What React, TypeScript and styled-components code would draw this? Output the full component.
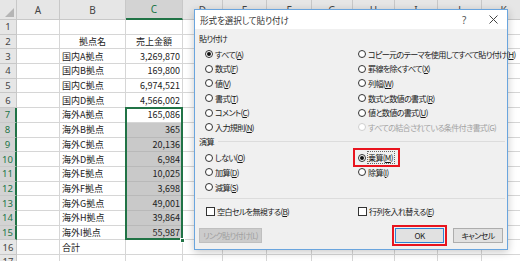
import React from "react";
import styled, { createGlobalStyle, css } from "styled-components";

const GlobalStyle = createGlobalStyle`
  html, body { margin: 0; padding: 0; background: #ffffff; }
  body { width: 520px; height: 261px; overflow: hidden; font-family: "Noto Sans CJK JP", "Noto Sans", sans-serif; }
  * { box-sizing: border-box; }
`;

const GREEN = "#217346";
const RED = "#e8141e";
const ROW_H = 14.7;
const COLS = [17, 43, 66, 57, 40, 44, 45, 41, 42, 43, 44, 44];
const COL_LETTERS = ["A", "B", "C", "D", "E", "F", "G", "H", "I", "J", "K"];

const Stage = styled.div`
  position: relative;
  width: 520px;
  height: 261px;
  overflow: hidden;
`;

const Sheet = styled.div`
  display: grid;
  grid-template-columns: ${COLS.map((c) => c + "px").join(" ")};
  grid-template-rows: 20px repeat(17, ${ROW_H}px);
  font-size: 9px;
  color: #222;
  font-feature-settings: "palt";
`;

type Kind = "corner" | "colhdr" | "rowhdr" | "data";

const Cell = styled.div<{ $kind: Kind; $sel?: boolean; $fill?: boolean; $align?: "left" | "right" | "center" }>`
  display: flex;
  align-items: center;
  overflow: hidden;
  white-space: nowrap;
  border-right: 1px solid #d6d6d6;
  border-bottom: 1px solid #d6d6d6;
  padding: 0 2px;
  justify-content: ${(p) => (p.$align === "right" ? "flex-end" : p.$align === "center" ? "center" : "flex-start")};
  ${(p) =>
    p.$kind === "corner" &&
    css`
      background: #e6e6e6;
      border-right: 1px solid #c8c8c8;
      border-bottom: 1px solid #c8c8c8;
      position: relative;
    `}
  ${(p) =>
    p.$kind === "colhdr" &&
    css`
      background: ${p.$sel ? "#d3d3d3" : "#e6e6e6"};
      color: ${p.$sel ? GREEN : "#444"};
      justify-content: center;
      font-size: 10px;
      font-family: "Noto Sans", sans-serif;
      border-right: 1px solid #c8c8c8;
      border-bottom: ${p.$sel ? `2px solid ${GREEN}` : "1px solid #c8c8c8"};
    `}
  ${(p) =>
    p.$kind === "rowhdr" &&
    css`
      background: ${p.$sel ? "#d3d3d3" : "#e6e6e6"};
      color: ${p.$sel ? GREEN : "#444"};
      justify-content: center;
      font-size: 9.5px;
      font-family: "Noto Sans", sans-serif;
      padding: 0;
      border-right: ${p.$sel ? `2px solid ${GREEN}` : "1px solid #c8c8c8"};
      border-bottom: 1px solid #c8c8c8;
    `}
  ${(p) =>
    p.$kind === "data" &&
    p.$fill &&
    css`
      background: #c9c9c9;
      border-right-color: #c9c9c9;
      border-bottom-color: #b9b9b9;
    `}
`;

const CornerTriangle = styled.div`
  position: absolute;
  right: 2px;
  bottom: 2px;
  width: 0;
  height: 0;
  border-left: 9px solid transparent;
  border-bottom: 9px solid #b5b5b5;
`;

const SelectionBox = styled.div`
  position: absolute;
  border: 2px solid ${GREEN};
  pointer-events: none;
`;

const FillHandle = styled.div`
  position: absolute;
  width: 5px;
  height: 5px;
  background: ${GREEN};
  border: 1px solid #fff;
`;

/* ---------------- Dialog ---------------- */

const Dialog = styled.div`
  position: absolute;
  left: 194px;
  top: 9px;
  width: 314px;
  height: 241px;
  border: 1px solid #6aa5de;
  background: #f0f0f0;
  box-shadow: 0 2px 8px rgba(0, 0, 0, 0.22);
  display: flex;
  flex-direction: column;
  font-size: 8.1px;
  color: #1a1a1a;
  font-feature-settings: "palt";
  letter-spacing: -0.7px;
`;

const TitleBar = styled.div`
  height: 19px;
  background: #ffffff;
  display: flex;
  align-items: center;
  padding-left: 5px;
  padding-right: 5px;
  font-size: 8.6px;
  letter-spacing: -0.1px;
`;

const TitleText = styled.div`
  flex: 1;
  color: #333;
`;

const HelpButton = styled.div`
  width: 12px;
  margin-right: 14px;
  text-align: center;
  color: #555;
  font-family: "Noto Sans", sans-serif;
  font-size: 10px;
`;

const CloseButton = styled.div`
  width: 18px;
  height: 19px;
  display: flex;
  align-items: center;
  justify-content: center;
`;

const Body = styled.div`
  flex: 1;
  display: flex;
  flex-direction: column;
  padding-top: 2px;
`;

const GroupLabel = styled.div<{ $line?: boolean }>`
  height: 14px;
  display: flex;
  align-items: center;
  padding-left: 4px;
  gap: 4px;
  &::after {
    content: "";
    flex: 1;
    height: 1px;
    margin-right: 2px;
    background: ${(p) => (p.$line ? "#dcdcdc" : "transparent")};
  }
`;

const RadioGrid = styled.div<{ $rows: number }>`
  display: grid;
  grid-template-columns: 153px 1fr;
  grid-template-rows: repeat(${(p) => p.$rows}, 14.6px);
  grid-auto-flow: column;
  padding-left: 10px;
  padding-top: 2px;
`;

const RadioItem = styled.div<{ $disabled?: boolean; $highlight?: boolean }>`
  display: flex;
  align-items: center;
  gap: 2px;
  color: ${(p) => (p.$disabled ? "#a3a3a3" : "inherit")};
  white-space: nowrap;
  ${(p) =>
    p.$highlight &&
    css`
      justify-self: start;
      align-self: center;
      height: 13px;
      outline: 2px solid ${RED};
      outline-offset: 1px;
      margin-left: -2px;
      padding-left: 2px;
      padding-right: 3px;
    `}
`;

const RadioCircle = styled.span<{ $checked?: boolean; $disabled?: boolean }>`
  width: 8px;
  height: 8px;
  border-radius: 50%;
  border: 1px solid ${(p) => (p.$disabled ? "#cfcfcf" : "#333")};
  background: #fff;
  display: inline-flex;
  align-items: center;
  justify-content: center;
  flex-shrink: 0;
  &::after {
    content: "";
    width: 4px;
    height: 4px;
    border-radius: 50%;
    background: ${(p) => (p.$checked ? "#111" : "transparent")};
  }
`;

const FocusText = styled.span<{ $focus?: boolean }>`
  ${(p) =>
    p.$focus &&
    css`
      outline: 1px dotted #666;
      outline-offset: 0px;
      padding-right: 1px;
    `}
`;

const Key = styled.span`
  text-decoration: underline;
  text-underline-offset: 1px;
`;

const Divider = styled.div`
  height: 1px;
  background: #dcdcdc;
  margin: 4px 2px 5px 2px;
`;

const CheckRow = styled.div`
  display: grid;
  grid-template-columns: 152px 1fr;
  padding-left: 11px;
  height: 14px;
  align-items: center;
`;

const CheckItem = styled.div`
  display: flex;
  align-items: center;
  gap: 2px;
  white-space: nowrap;
`;

const CheckBox = styled.span`
  width: 9px;
  height: 9px;
  border: 1px solid #333;
  background: #fff;
  flex-shrink: 0;
`;

const ButtonRow = styled.div`
  display: flex;
  align-items: center;
  padding: 0 4px;
  margin-top: 10px;
`;

const Button = styled.div<{ $w: number; $default?: boolean; $disabled?: boolean }>`
  width: ${(p) => p.$w}px;
  height: 15px;
  display: flex;
  align-items: center;
  justify-content: center;
  background: ${(p) => (p.$disabled ? "#cccccc" : "#e1e1e1")};
  border: 1px solid ${(p) => (p.$default ? "#2f83d4" : p.$disabled ? "#bfbfbf" : "#adadad")};
  color: ${(p) => (p.$disabled ? "#a0a0a0" : "#222")};
  white-space: nowrap;
`;

const Spacer = styled.div`
  flex: 1;
`;

const Highlight = styled.div`
  display: inline-flex;
  outline: 2px solid ${RED};
  outline-offset: 1px;
  margin-right: 9px;
`;

/* ---------------- Data ---------------- */

const rows: [string, string][] = [
  ["", ""],
  ["拠点名", "売上金額"],
  ["国内A拠点", "3,269,870"],
  ["国内B拠点", "169,800"],
  ["国内C拠点", "6,974,521"],
  ["国内D拠点", "4,566,002"],
  ["海外A拠点", "165,086"],
  ["海外B拠点", "365"],
  ["海外C拠点", "20,136"],
  ["海外D拠点", "6,984"],
  ["海外E拠点", "10,025"],
  ["海外F拠点", "3,698"],
  ["海外G拠点", "49,001"],
  ["海外H拠点", "39,864"],
  ["海外I拠点", "55,987"],
  ["合計", ""],
  ["", ""],
];

const pasteLeft: [string, string, boolean?][] = [
  ["すべて", "A", true],
  ["数式", "F"],
  ["値", "V"],
  ["書式", "T"],
  ["コメント", "C"],
  ["入力規則", "N"],
];

const pasteRight: [string, string, boolean?][] = [
  ["コピー元のテーマを使用してすべて貼り付け", "H"],
  ["罫線を除くすべて", "X"],
  ["列幅", "W"],
  ["数式と数値の書式", "R"],
  ["値と数値の書式", "U"],
  ["すべての結合されている条件付き書式", "G", true],
];

const Label = ({ text, k }: { text: string; k: string }) => (
  <>
    {text}(<Key>{k}</Key>)
  </>
);

export default function App() {
  const selTop = 20 + 6 * ROW_H;
  const selBottom = 20 + 15 * ROW_H;
  const cLeft = 17 + 43 + 66;
  return (
    <Stage>
      <GlobalStyle />
      <Sheet>
        <Cell $kind="corner">
          <CornerTriangle />
        </Cell>
        {COL_LETTERS.map((l) => (
          <Cell key={l} $kind="colhdr" $sel={l === "C"}>
            {l}
          </Cell>
        ))}
        {rows.map(([b, c], i) => {
          const r = i + 1;
          const inSel = r >= 7 && r <= 15;
          return (
            <React.Fragment key={r}>
              <Cell $kind="rowhdr" $sel={inSel}>
                {r}
              </Cell>
              <Cell $kind="data" />
              <Cell $kind="data" $align={r === 2 ? "center" : "left"}>
                {b}
              </Cell>
              <Cell $kind="data" $align={r === 2 ? "center" : "right"} $fill={r >= 8 && r <= 15}>
                {c}
              </Cell>
              {COL_LETTERS.slice(3).map((l) => (
                <Cell key={l} $kind="data" />
              ))}
            </React.Fragment>
          );
        })}
      </Sheet>
      <SelectionBox style={{ left: cLeft - 1, top: selTop - 1, width: 58, height: selBottom - selTop + 1 }} />
      <FillHandle style={{ left: cLeft + 54, top: selBottom - 3 }} />

      <Dialog>
        <TitleBar>
          <TitleText>形式を選択して貼り付け</TitleText>
          <HelpButton>?</HelpButton>
          <CloseButton>
            <svg width="9" height="9" viewBox="0 0 9 9">
              <path d="M0.5 0.5 L8.5 8.5 M8.5 0.5 L0.5 8.5" stroke="#444" strokeWidth="1" fill="none" />
            </svg>
          </CloseButton>
        </TitleBar>
        <Body>
          <GroupLabel>貼り付け</GroupLabel>
          <RadioGrid $rows={6}>
            {pasteLeft.map(([t, k, checked]) => (
              <RadioItem key={k}>
                <RadioCircle $checked={!!checked} />
                <span>
                  <Label text={t} k={k} />
                </span>
              </RadioItem>
            ))}
            {pasteRight.map(([t, k, disabled]) => (
              <RadioItem key={k} $disabled={!!disabled}>
                <RadioCircle $disabled={!!disabled} />
                <span>{disabled ? `${t}(${k})` : <Label text={t} k={k} />}</span>
              </RadioItem>
            ))}
          </RadioGrid>
          <GroupLabel $line>演算</GroupLabel>
          <RadioGrid $rows={3}>
            <RadioItem>
              <RadioCircle />
              <span>
                <Label text="しない" k="O" />
              </span>
            </RadioItem>
            <RadioItem>
              <RadioCircle />
              <span>
                <Label text="加算" k="D" />
              </span>
            </RadioItem>
            <RadioItem>
              <RadioCircle />
              <span>
                <Label text="減算" k="S" />
              </span>
            </RadioItem>
            <RadioItem $highlight>
              <RadioCircle $checked />
              <FocusText $focus>
                <Label text="乗算" k="M" />
              </FocusText>
            </RadioItem>
            <RadioItem>
              <RadioCircle />
              <span>
                <Label text="除算" k="I" />
              </span>
            </RadioItem>
          </RadioGrid>
          <Divider />
          <CheckRow>
            <CheckItem>
              <CheckBox />
              <span>
                <Label text="空白セルを無視する" k="B" />
              </span>
            </CheckItem>
            <CheckItem>
              <CheckBox />
              <span>
                <Label text="行列を入れ替える" k="E" />
              </span>
            </CheckItem>
          </CheckRow>
          <ButtonRow>
            <Button $w={63} $disabled>
              リンク貼り付け(L)
            </Button>
            <Spacer />
            <Highlight>
              <Button $w={49} $default>
                OK
              </Button>
            </Highlight>
            <Button $w={50}>キャンセル</Button>
          </ButtonRow>
        </Body>
      </Dialog>
    </Stage>
  );
}
